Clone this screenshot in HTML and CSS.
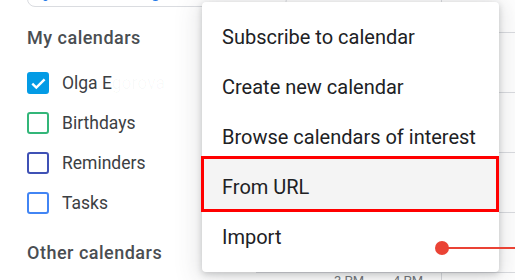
FILE: index.html
```html
<!DOCTYPE html>
<html lang="en">
<head>
    <meta charset="UTF-8">
    <meta name="viewport" content="width=device-width, initial-scale=1.0">
    <title>Calendar - add calendar</title>
    <link rel="stylesheet" href="styles.css">
</head>
<body>
    <div class="app">
        <aside class="sidebar">
            <div class="search">
                <span class="peek peek-small"></span>
                <span class="peek peek-big"></span>
            </div>
            <h2 class="section-title">My calendars</h2>
            <ul class="cal-list">
                <li class="cal-item">
                    <span class="check check-on">
                        <svg width="17" height="17" viewBox="0 0 17 17"><path d="M2.3 8.6 L6.3 12.6 L14.6 4.3" fill="none" stroke="#fff" stroke-width="2.4"/></svg>
                    </span>
                    <span class="label">Olga E<span class="hidden-name">gorova</span></span>
                </li>
                <li class="cal-item">
                    <span class="check check-green"></span>
                    <span class="label">Birthdays</span>
                </li>
                <li class="cal-item">
                    <span class="check check-indigo"></span>
                    <span class="label">Reminders</span>
                </li>
                <li class="cal-item">
                    <span class="check check-blue"></span>
                    <span class="label">Tasks</span>
                </li>
            </ul>
            <h2 class="section-title other">Other calendars</h2>
        </aside>

        <main class="timeline">
            <div class="cell first"></div><div class="cell first last-col"></div>
            <div class="cell"></div><div class="cell last-col"></div>
            <div class="cell"></div><div class="cell last-col"></div>
            <div class="cell"></div><div class="cell last-col"></div>
            <div class="cell"></div><div class="cell last-col"></div>
            <div class="hours"><span>3 PM</span><span>4 PM</span></div><div class="hours-end"></div>
        </main>
    </div>

    <div class="menu">
        <div class="marked"></div>
        <div class="menu-item">Subscribe to calendar</div>
        <div class="menu-item">Create new calendar</div>
        <div class="menu-item">Browse calendars of interest</div>
        <div class="menu-item">From URL</div>
        <div class="menu-item">Import</div>
    </div>

    <div class="now-line"><span class="now-dot"></span></div>
</body>
</html>
```

FILE: styles.css
```css
body {
    margin: 0;
    background: #fff;
    font-family: Roboto, "Liberation Sans", Arial, sans-serif;
    color: #3c4043;
    overflow: hidden;
}
.app {
    display: flex;
    height: 280px;
}
.sidebar {
    width: 256px;
    flex: none;
    padding-left: 27px;
    box-sizing: border-box;
}
.search {
    height: 37px;
    margin-top: -30px;
    width: 260px;
    border: 1px solid #dadce0;
    border-radius: 8px;
    box-sizing: border-box;
    display: flex;
    align-items: flex-end;
    padding: 0 0 5px 15px;
}
.peek {
    display: block;
    background: #1a73e8;
    border-radius: 50%;
}
.peek-small {
    width: 5px;
    height: 5px;
}
.peek-big {
    width: 7px;
    height: 6px;
    margin-left: 104px;
}
.section-title {
    margin: 19px 0 0;
    font-size: 18px;
    line-height: 24px;
    font-weight: 500;
    letter-spacing: 0.5px;
    color: #4a4e52;
}
.section-title.other {
    margin-top: 18px;
}
.cal-list {
    list-style: none;
    margin: 13px 0 0;
    padding: 0;
}
.cal-item {
    height: 40px;
    display: flex;
    align-items: center;
    gap: 13px;
}
.check {
    width: 22px;
    height: 22px;
    box-sizing: border-box;
    border: 2.5px solid;
    border-radius: 3px;
    display: flex;
    align-items: center;
    justify-content: center;
}
.check-on {
    background: #039be5;
    border-color: #039be5;
}
.check-green { border-color: #33b679; }
.check-indigo { border-color: #3f51b5; }
.check-blue { border-color: #4285f4; }
.label {
    font-size: 17.5px;
    color: #3c4043;
}
.hidden-name {
    color: rgba(60, 64, 67, 0.03);
}

.timeline {
    flex: 1;
    display: grid;
    grid-template-columns: 186px 1fr;
    grid-template-rows: 33px 60px 60px 60px 60px 1fr;
}
.cell {
    border-bottom: 1px solid #dadce0;
}
.cell:nth-child(odd) {
    border-right: 1px solid #dadce0;
}
.hours {
    border-right: 1px solid #dadce0;
    display: flex;
    gap: 29px;
    padding-left: 78px;
    font-size: 13px;
    line-height: 16px;
    color: #70757a;
}

.menu {
    position: absolute;
    left: 202px;
    top: 2px;
    width: 297px;
    padding: 10px 0;
    background: #fff;
    border-radius: 4px;
    box-shadow: 0 2px 6px rgba(60, 64, 67, 0.25), 0 4px 24px 5px rgba(60, 64, 67, 0.13);
}
.marked {
    position: absolute;
    left: -1px;
    right: 0;
    top: 154px;
    height: 56px;
    box-sizing: border-box;
    border: 3px solid #ff0000;
    background: #f4f4f4;
}
.menu-item {
    position: relative;
    height: 50px;
    display: flex;
    align-items: center;
    padding: 0 20px;
    font-size: 20px;
    color: #202124;
}

.now-line {
    position: absolute;
    left: 442px;
    right: 0;
    top: 247px;
    height: 2px;
    background: #ea4335;
}
.now-dot {
    position: absolute;
    left: -7px;
    top: -6px;
    width: 14px;
    height: 14px;
    border-radius: 50%;
    background: #ea4335;
}
```
